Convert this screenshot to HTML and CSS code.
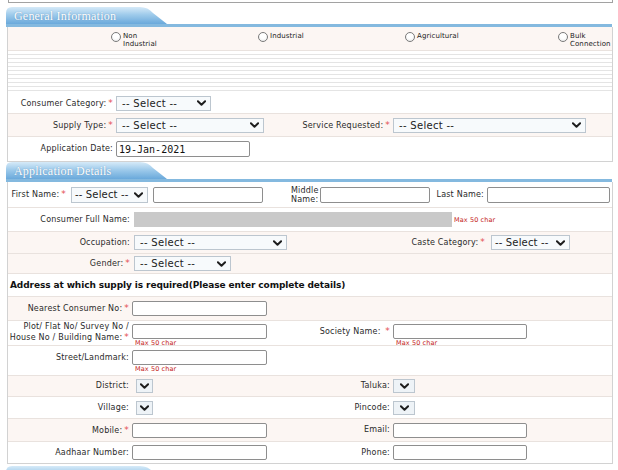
FILE: index.html
```html
<!DOCTYPE html>
<html lang="en">
<head>
<meta charset="utf-8">
<title>Application Form</title>
<link rel="stylesheet" href="styles.css">
</head>
<body>
<div class="page">
  <div class="prev"></div>

  <section class="panel">
    <div class="panel-head"><div class="tab">General Information</div></div>
    <div class="box gen">
      <div class="row radios pink h24">
        <label class="radio r1"><span class="dot"></span><span>Non<br>Industrial</span></label>
        <label class="radio r2"><span class="dot"></span><span>Industrial</span></label>
        <label class="radio r3"><span class="dot"></span><span>Agricultural</span></label>
        <label class="radio r4"><span class="dot"></span><span>Bulk<br>Connection</span></label>
      </div>
      <div class="stripes"></div>
      <div class="row h21">
        <div class="lbl c1">Consumer Category:<span class="req">*</span></div>
        <div class="sel w95"><span>-- Select --</span><svg viewBox="0 0 10 6"><path d="M1 1 L5 5 L9 1"/></svg></div>
      </div>
      <div class="row pink h23">
        <div class="lbl c1">Supply Type:<span class="req">*</span></div>
        <div class="cell c2"><div class="sel w148"><span>-- Select --</span><svg viewBox="0 0 10 6"><path d="M1 1 L5 5 L9 1"/></svg></div></div>
        <div class="lbl c3">Service Requested:<span class="req">*</span></div>
        <div class="sel w193"><span>-- Select --</span><svg viewBox="0 0 10 6"><path d="M1 1 L5 5 L9 1"/></svg></div>
      </div>
      <div class="row h24 last">
        <div class="lbl c1">Application Date:</div>
        <input class="inp date w134" type="text" value="19-Jan-2021">
      </div>
    </div>
  </section>

  <section class="panel">
    <div class="panel-head"><div class="tab">Application Details</div></div>
    <div class="box app">
      <div class="row h26">
        <div class="lbl fn">First Name:<span class="req">*</span></div>
        <div class="sel tight w77"><span>-- Select --</span><svg viewBox="0 0 10 6"><path d="M1 1 L5 5 L9 1"/></svg></div>
        <input class="inp w110 ml5" type="text">
        <div class="mid">Middle<br>Name:</div>
        <input class="inp w110" type="text">
        <div class="lbl ln">Last Name:</div>
        <input class="inp w123" type="text">
      </div>
      <div class="row h24">
        <div class="lbl c1">Consumer Full Name:</div>
        <div class="grey"></div>
        <div class="note side">Max 50 char</div>
      </div>
      <div class="row pink h22">
        <div class="lbl c1">Occupation:</div>
        <div class="sel w153"><span>-- Select --</span><svg viewBox="0 0 10 6"><path d="M1 1 L5 5 L9 1"/></svg></div>
        <div class="lbl caste">Caste Category:<span class="req">*</span></div>
        <div class="sel tight w79"><span>-- Select --</span><svg viewBox="0 0 10 6"><path d="M1 1 L5 5 L9 1"/></svg></div>
      </div>
      <div class="row pink h20">
        <div class="lbl c1">Gender:<span class="req">*</span></div>
        <div class="sel w97"><span>-- Select --</span><svg viewBox="0 0 10 6"><path d="M1 1 L5 5 L9 1"/></svg></div>
      </div>
      <div class="row h23">
        <h3 class="addr-title">Address at which supply is required(Please enter complete details)</h3>
      </div>
      <div class="addr">
        <div class="row pink h24">
          <div class="lbl c1">Nearest Consumer No:<span class="req">*</span></div>
          <input class="inp w135" type="text">
        </div>
        <div class="row top h25 pt3">
          <div class="lbl c1 two">Plot/ Flat No/ Survey No /<br>House No / Building Name:<span class="req">*</span></div>
          <div class="cell c2 stack"><input class="inp w135" type="text"><div class="note">Max 50 char</div></div>
          <div class="lbl c3">Society Name: <span class="req">*</span></div>
          <div class="cell stack"><input class="inp w134" type="text"><div class="note">Max 50 char</div></div>
        </div>
        <div class="row top h30 pt4">
          <div class="lbl c1">Street/Landmark:</div>
          <div class="cell c2 stack"><input class="inp w135" type="text"><div class="note">Max 50 char</div></div>
        </div>
        <div class="row pink h21">
          <div class="lbl c1">District:</div>
          <div class="cell c2"><div class="sel mini w17"><svg viewBox="0 0 10 6"><path d="M1 1 L5 5 L9 1"/></svg></div></div>
          <div class="lbl c3">Taluka:</div>
          <div class="sel mini w22"><svg viewBox="0 0 10 6"><path d="M1 1 L5 5 L9 1"/></svg></div>
        </div>
        <div class="row h22">
          <div class="lbl c1">Village:</div>
          <div class="cell c2"><div class="sel mini w17"><svg viewBox="0 0 10 6"><path d="M1 1 L5 5 L9 1"/></svg></div></div>
          <div class="lbl c3">Pincode:</div>
          <div class="sel mini w22"><svg viewBox="0 0 10 6"><path d="M1 1 L5 5 L9 1"/></svg></div>
        </div>
        <div class="row pink h23">
          <div class="lbl c1">Mobile:<span class="req">*</span></div>
          <div class="cell c2"><input class="inp w135" type="text"></div>
          <div class="lbl c3">Email:</div>
          <input class="inp w134" type="text">
        </div>
        <div class="row h21 last">
          <div class="lbl c1">Aadhaar Number:</div>
          <div class="cell c2"><input class="inp w135" type="text"></div>
          <div class="lbl c3">Phone:</div>
          <input class="inp w134" type="text">
        </div>
      </div>
    </div>
  </section>

  <section class="panel next">
    <div class="panel-head"><div class="tab"></div></div>
  </section>
</div>
</body>
</html>
```

FILE: styles.css
```css
* { box-sizing: border-box; margin: 0; padding: 0; }

body {
  margin: 0;
  width: 618px;
  overflow: hidden;
  background: #fff;
  color: #2a2a2a;
  font-family: "DejaVu Sans", "Noto Sans", sans-serif;
  font-size: 8px;
  letter-spacing: .2px;
}

.page { padding-left: 6px; width: 618px; }

.prev {
  margin-left: 2px;
  width: 605px;
  height: 3px;
  border: 1px solid #a2a2a2;
  border-top: 0;
}

/* section header tab */
.panel-head {
  margin-top: 4px;
  width: 606px;
  height: 20px;
  border-bottom: 3px solid #84b9df;
}
.panel + .panel .panel-head { margin-top: 0; }
.panel.next .panel-head { margin-top: 2px; }

.tab {
  width: 162px;
  height: 17px;
  padding-left: 8px;
  background: linear-gradient(#d6eaf8, #9fcbeb 45%, #6aa9db);
  clip-path: path('M0 17 V6 Q0 0 6 0 H134 Q142 0 147 6 L161 17 Z');
  color: #fff;
  font-family: "Liberation Serif", serif;
  font-size: 12px;
  line-height: 18px;
  letter-spacing: .2px;
  text-shadow: 0 0 1px rgba(50, 100, 150, .6);
}

/* bordered content box */
.box {
  margin-left: 1px;
  width: 606px;
  border: 1px solid #d2d2d2;
  border-top: 0;
}

.row {
  display: flex;
  align-items: center;
  border-bottom: 1px solid #e9e2de;
}
.row.last { border-bottom: 0; }
.row.top { align-items: flex-start; }
.pt3 { padding-top: 3px; }
.pt4 { padding-top: 4px; }
.pink { background: #fcf6f3; }

.h20 { height: 20px; }
.h21 { height: 21px; }
.h22 { height: 22px; }
.h23 { height: 23px; }
.h24 { height: 24px; }
.h25 { height: 25px; }
.h26 { height: 26px; }
.h30 { height: 30px; }

/* radios */
.radios { align-items: flex-start; padding: 5px 0 0 103px; }
.radio {
  display: flex;
  align-items: flex-start;
  gap: 2px;
  font-size: 7px;
  line-height: 8px;
  letter-spacing: .1px;
  color: #222;
}
.r1, .r2 { width: 147px; }
.r3 { width: 153px; }
.dot {
  flex: none;
  width: 10px;
  height: 10px;
  border: 1px solid #7a7a7a;
  border-radius: 50%;
  background: radial-gradient(circle at 50% 35%, #fff 40%, #e6e6e6);
}

.stripes {
  height: 42px;
  background: repeating-linear-gradient(#fff 0 3px, #e4e4e4 3px 4px);
}

/* labels */
.lbl {
  flex: none;
  text-align: right;
  padding-right: 3px;
  white-space: nowrap;
  line-height: 10px;
}
.req {
  color: #e45050;
  font-size: 9px;
  margin-left: 2px;
}
.cell { flex: none; }
.stack { display: flex; flex-direction: column; }

.gen .c1 { width: 108px; }
.gen .c2 { width: 154px; }
.gen .c3 { width: 123px; }

.app .c1 { width: 126px; padding-right: 4px; }
.app .fn { width: 63px; padding-right: 5px; }
.app .ln { width: 57px; padding-right: 3px; }
.app .caste { width: 204px; padding-right: 6px; }
.mid { flex: none; width: 57px; padding-left: 28px; line-height: 9px; }

.addr .c1 { width: 124px; padding-right: 3px; }
.addr .c2 { width: 138px; }
.addr .c3 { width: 123px; padding-right: 3px; }
.addr .top .lbl { line-height: 15px; }
.addr .top .lbl.two { line-height: 10px; margin-top: -2px; }

/* fake select */
.sel {
  flex: none;
  display: flex;
  align-items: center;
  justify-content: space-between;
  height: 15px;
  padding: 0 4px 0 5px;
  border: 1px solid #bcc6cf;
  background: #f7fafc;
  font-size: 10px;
  letter-spacing: .3px;
  color: #222;
  white-space: nowrap;
}
.sel.tight { padding: 0 4px 0 3px; letter-spacing: .15px; }
.sel svg {
  flex: none;
  width: 9px;
  height: 6px;
  fill: none;
  stroke: #1e1e1e;
  stroke-width: 2.2;
  stroke-linecap: round;
  stroke-linejoin: round;
}
.sel.tight svg { margin-left: 3px; }
.sel.mini { justify-content: center; padding: 0; height: 14px; background: #eef3f7; }
.addr .c2 .sel.mini { margin-left: 4px; }
.app .h26 .sel { height: 16px; }

/* text inputs */
.inp {
  flex: none;
  display: block;
  height: 15px;
  border: 1px solid #8e8e8e;
  border-radius: 2px;
  background: #fff;
  font-family: "DejaVu Sans Mono", monospace;
  font-size: 10px;
  letter-spacing: 0;
  color: #111;
  padding: 0 2px;
  outline: none;
}
.inp.date { height: 16px; }
.app .h26 .inp { height: 16px; margin-top: 1px; }
.ml5 { margin-left: 5px; }

.w17 { width: 17px; }
.w22 { width: 22px; }
.w77 { width: 77px; }
.w79 { width: 79px; }
.w95 { width: 95px; }
.w97 { width: 97px; }
.w110 { width: 110px; }
.w123 { width: 123px; }
.w134 { width: 134px; }
.w135 { width: 135px; }
.w148 { width: 148px; }
.w153 { width: 153px; }
.w193 { width: 193px; }

.grey { flex: none; width: 318px; height: 15px; background: #c9c9c9; }

.note {
  color: #c41818;
  font-size: 6.5px;
  line-height: 8px;
  letter-spacing: .1px;
  padding-left: 3px;
}
.note.side { padding-left: 2px; }

.addr-title {
  padding-left: 2px;
  font-size: 9px;
  font-weight: bold;
  letter-spacing: -.1px;
  color: #111;
}
```
